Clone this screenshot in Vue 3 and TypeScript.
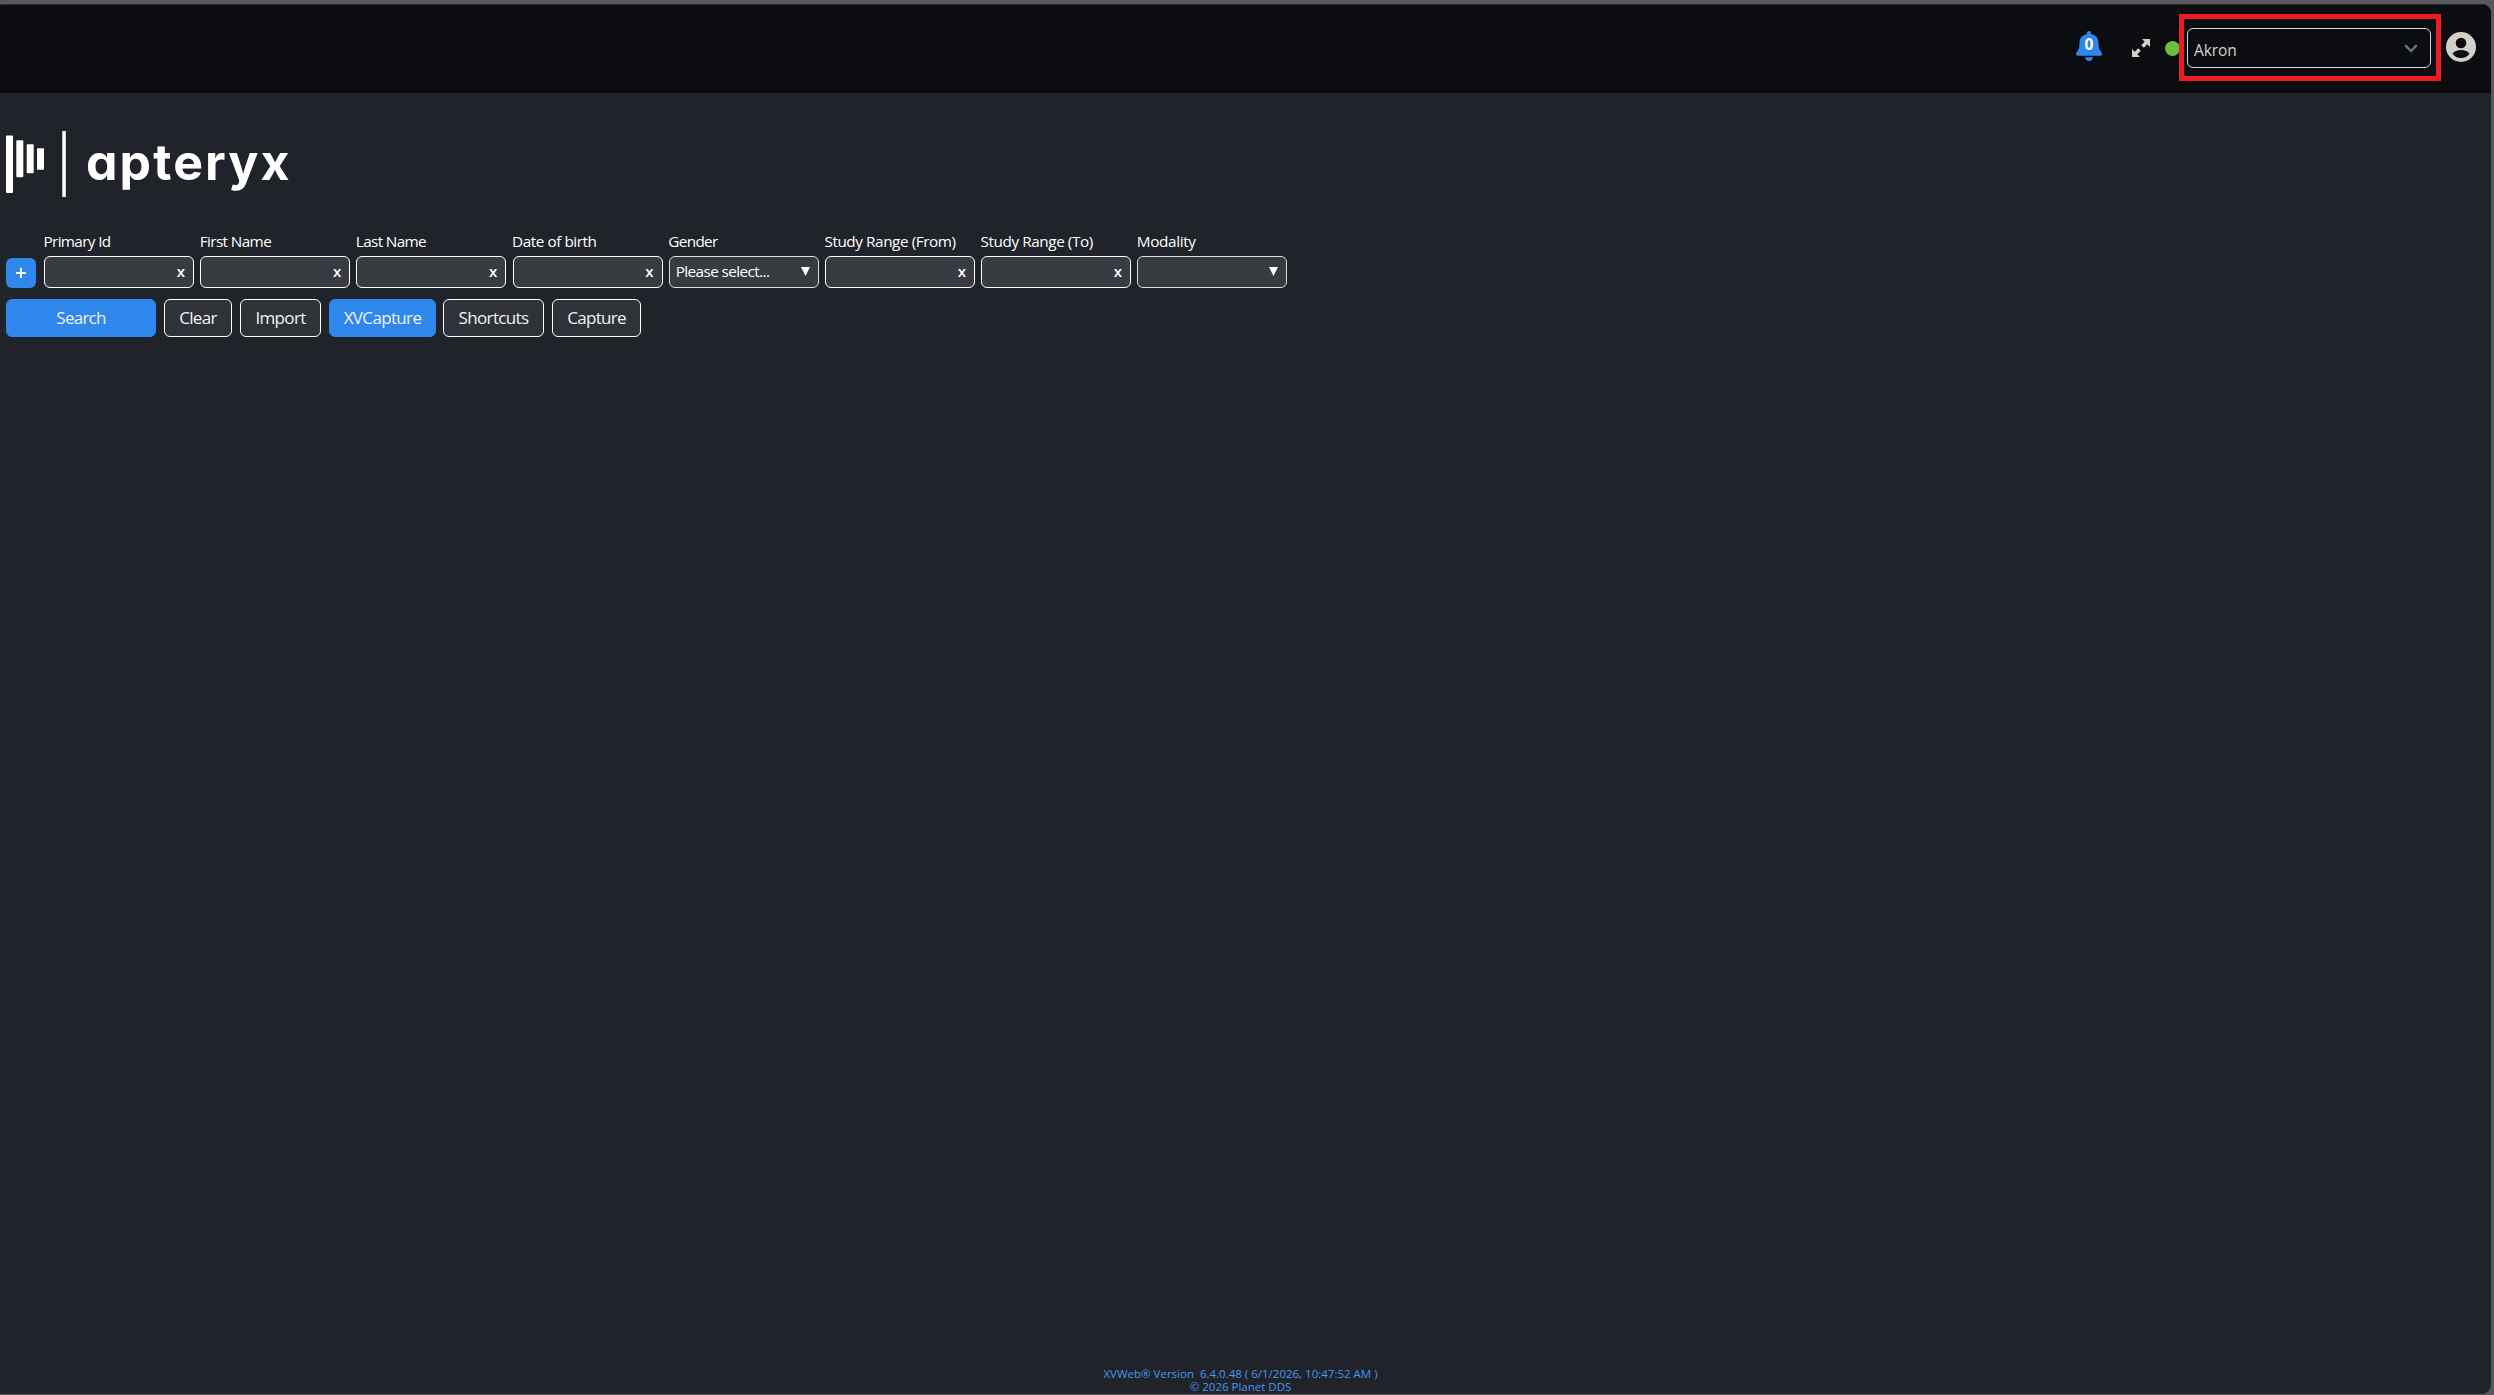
<script setup lang="ts">
type Field = { label: string; kind: 'text' | 'select'; value?: string; track: number }
type Action = { label: string; width: number; gap: number; primary?: boolean; track: number }

const fields: Field[] = [
  { label: 'Primary Id', kind: 'text', track: -0.65 },
  { label: 'First Name', kind: 'text', track: -0.6 },
  { label: 'Last Name', kind: 'text', track: -0.65 },
  { label: 'Date of birth', kind: 'text', track: -0.45 },
  { label: 'Gender', kind: 'select', value: 'Please select...', track: -0.65 },
  { label: 'Study Range (From)', kind: 'text', track: -0.43 },
  { label: 'Study Range (To)', kind: 'text', track: -0.43 },
  { label: 'Modality', kind: 'select', value: '', track: -0.35 },
]

const actions: Action[] = [
  { label: 'Search', width: 150, gap: 8, primary: true, track: -0.75 },
  { label: 'Clear', width: 68, gap: 8, track: -0.65 },
  { label: 'Import', width: 81, gap: 8, track: -0.65 },
  { label: 'XVCapture', width: 107, gap: 7, primary: true, track: -0.65 },
  { label: 'Shortcuts', width: 101, gap: 8, track: -0.65 },
  { label: 'Capture', width: 89, gap: 0, track: -0.7 },
]
</script>

<template>
  <div class="frame">
    <div class="window">
      <header class="topbar">
        <div class="bell">
          <svg width="26" height="30" viewBox="0 0 26 30">
            <path fill="#2f86eb" d="M13 0c1.300 0 2 .9 2 2v1c4.800.9 7.500 4.400 7.500 9 0 5 1 7 3 9.300.9 1.200.5 3.500-1.500 3.500H2c-2 0-2.400-2.300-1.500-3.500 2-2.300 3-4.300 3-9.300 0-4.600 2.700-8.100 7.500-9V2c0-1.100.7-2 2-2z" />
            <path fill="#2f86eb" d="M9 26.300h8c0 2.300-1.700 3.700-4 3.700s-4-1.400-4-3.700z" />
          </svg>
          <span class="count">0</span>
        </div>
        <svg class="expand" width="18" height="18" viewBox="0 0 18 18">
          <g fill="#d5cfca">
            <path d="M10 0h8v8l-2.700-2.700-3.500 3.500-2.600-2.600L12.700 2.700z" />
            <path d="M8 18H0v-8l2.700 2.700 3.500-3.500 2.600 2.600-3.500 3.500z" />
          </g>
        </svg>
        <i class="status"></i>
        <div class="highlight">
          <div class="location">
            <span>Akron</span>
            <svg width="14" height="9" viewBox="0 0 14 9"><path d="M1.200 1.200 7 7l5.800-5.800" fill="none" stroke="#69737d" stroke-width="2.400" /></svg>
          </div>
        </div>
        <svg class="avatar" width="30" height="30" viewBox="0 0 30 30">
          <circle cx="15" cy="15" r="15" fill="#d5cfca" />
          <circle cx="15" cy="11" r="5.300" fill="#0c0d11" />
          <path d="M6.500 21.800C8 19.200 11.500 18 15 18s7 1.200 8.500 3.800C21.600 24.600 18.500 26 15 26s-6.600-1.400-8.500-4.200z" fill="#0c0d11" />
        </svg>
      </header>

      <div class="brand">
        <svg width="60" height="66" viewBox="0 0 60 66" fill="#fff">
          <rect x="0" y="4.500" width="7" height="57.500" rx="1" />
          <rect x="10.300" y="9.300" width="7" height="37" rx="1" />
          <rect x="20.700" y="13.300" width="7" height="29" rx="1" />
          <rect x="31" y="17.300" width="7" height="21.500" rx="1" />
          <rect x="56.300" y="0" width="3.500" height="66" />
        </svg>
        <span class="wordmark">apteryx</span>
      </div>

      <main>
        <div class="filters">
          <button class="add">
            <svg width="10" height="10" viewBox="0 0 10 10"><path d="M5 0v10M0 5h10" stroke="#fff" stroke-width="2" /></svg>
          </button>
          <div v-for="f in fields" :key="f.label" class="field">
            <label :style="{ letterSpacing: f.track + 'px' }">{{ f.label }}</label>
            <div class="box" :class="f.kind">
              <span class="value">{{ f.value }}</span>
              <span v-if="f.kind === 'text'" class="clear">x</span>
              <svg v-else width="9" height="9" viewBox="0 0 9 9"><path d="M0 0h9L4.500 9z" fill="#fff" /></svg>
            </div>
          </div>
        </div>
        <div class="actions">
          <button
            v-for="a in actions"
            :key="a.label"
            :class="{ primary: a.primary }"
            :style="{ width: a.width + 'px', marginRight: a.gap + 'px', letterSpacing: a.track + 'px' }"
          >{{ a.label }}</button>
        </div>
      </main>

      <footer>
        <div class="version">XVWeb® Version&nbsp; 6.4.0.48 ( 6/1/2026, 10:47:52 AM )</div>
        <div class="rights">© 2026 Planet DDS</div>
      </footer>
    </div>
  </div>
</template>

<style>
body { margin: 0; background: #57585c; }
</style>

<style scoped>
.frame {
  box-sizing: border-box;
  width: 2494px;
  height: 1395px;
  padding: 4px 3px 1px 0;
  background: #57585c;
  font-family: "Open Sans", "Noto Sans", sans-serif;
  color: #fff;
  overflow: hidden;
}
.window {
  display: flex;
  flex-direction: column;
  height: 1390px;
  background: #20232a;
  border-radius: 3px 9px 9px 0;
  overflow: hidden;
}
.topbar {
  display: flex;
  align-items: flex-start;
  justify-content: flex-end;
  box-sizing: border-box;
  height: 89px;
  padding-right: 15px;
  background: #0c0d11;
  border-top: 1px solid #2d2e31;
  flex: none;
}
.bell { position: relative; width: 26px; height: 30px; margin: 26px 30px 0 0; }
.bell svg { display: block; }
.count {
  position: absolute;
  inset: 4px 0 auto 0;
  text-align: center;
  font-size: 15.5px;
  line-height: 19px;
  font-weight: 700;
}
.expand { margin: 34px 15px 0 0; }
.status { width: 15px; height: 15px; border-radius: 50%; background: #6cbf41; margin: 36px -1px 0 0; }
.highlight {
  box-sizing: border-box;
  width: 262px;
  height: 67px;
  border: 5px solid #ed1c24;
  margin: 9px 5px 0 0;
  padding: 9px 5px 8px 3px;
  z-index: 1;
}
.location {
  display: flex;
  align-items: center;
  justify-content: space-between;
  box-sizing: border-box;
  width: 244px;
  height: 40px;
  border: 1px solid #d3d5d8;
  border-radius: 6px;
  padding: 0 12px 0 6px;
  font-size: 15.5px;
  color: #d5d2cd;
}
.location span { padding-top: 3px; letter-spacing: -0.1px; }
.avatar { margin-top: 27px; }
.brand { display: flex; height: 66px; padding: 38px 0 0 6px; flex: none; }
.wordmark {
  font-family: Inter, sans-serif;
  font-feature-settings: "cv11" 1;
  font-size: 50px;
  font-weight: 700;
  line-height: 62px;
  letter-spacing: 2.1px;
  margin-left: 20px;
}
main { padding: 34px 0 0 6px; flex: 1; }
.filters { display: flex; align-items: flex-end; gap: 6.2px; }
.add {
  display: flex;
  align-items: center;
  justify-content: center;
  width: 30px;
  height: 30px;
  margin-right: 1.8px;
  padding: 0;
  border: 0;
  border-radius: 6px;
  background: #2f86eb;
}
.field { width: 150px; }
.field label {
  display: block;
  height: 25px;
  line-height: 21px;
  font-size: 15.3px;
  text-indent: -0.5px;
  white-space: nowrap;
}
.box {
  display: flex;
  align-items: center;
  justify-content: space-between;
  box-sizing: border-box;
  height: 32px;
  padding: 0 8px 2px 6px;
  border: 1px solid #fff;
  border-radius: 6px;
  background: #393b42;
  font-size: 15.3px;
  letter-spacing: -0.6px;
}
.box.select { border-color: #dcdcdc; }
.clear { font-size: 15px; font-weight: 600; letter-spacing: 0; padding-bottom: 1px; }
.actions { display: flex; padding-top: 11px; }
.actions button {
  box-sizing: border-box;
  height: 38px;
  padding: 0 0 2px;
  border: 1px solid #fff;
  border-radius: 6px;
  background: #30323a;
  color: #f2f2f2;
  font-family: inherit;
  font-size: 17px;
}
.actions button.primary { background: #2f86eb; border-color: #2f86eb; }
footer {
  width: 2481px;
  height: 26px;
  text-align: center;
  font-size: 11.5px;
  line-height: 12.5px;
  color: #4796f0;
  flex: none;
}
</style>
